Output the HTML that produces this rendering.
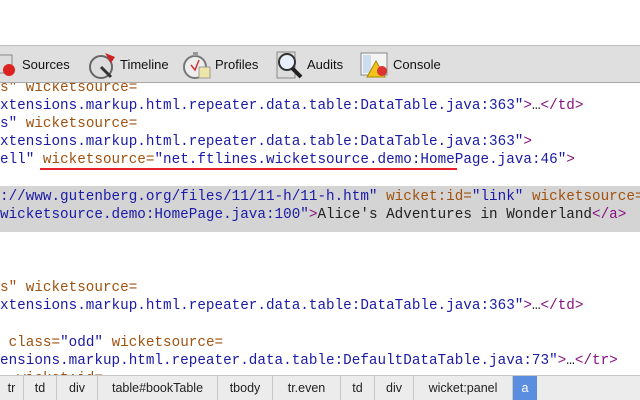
<!DOCTYPE html>
<html><head><meta charset="utf-8"><style>
*{margin:0;padding:0;box-sizing:border-box}
html,body{width:640px;height:400px;overflow:hidden}
body{background:#fff;position:relative;font-family:"Liberation Sans",Arial,sans-serif}
#tb{position:absolute;left:0;top:45px;width:640px;height:38px;background:#dfdfdf;border-top:1px solid #bdbdbd;border-bottom:1px solid #a8a8a8;z-index:4}
#tb .t{position:absolute;top:11px;font-size:13px;color:#111}
#tb svg{position:absolute}
#code{position:absolute;left:0;top:79px;width:640px;font-family:"Liberation Mono",monospace;font-size:14.3px;line-height:18px;color:#222}
.l{height:18px;white-space:pre;overflow:hidden}
.a{color:#a0520f}.v{color:#1a1aa6}.g{color:#881280}
#hl{position:absolute;left:0;top:186px;width:640px;height:46px;background:#d4d4d4}
#ul{position:absolute;left:40px;top:168px;width:417px;height:2px;background:#e8202a;z-index:2}
#bc{position:absolute;left:0;top:375px;width:640px;height:25px;background:#ececec;border-top:1px solid #c9c9c9;font-size:12.5px;color:#222;z-index:3}
#bc span{position:absolute;top:0;height:25px;line-height:24px;border-right:1px solid #c8c8c8;text-align:center}
</style></head><body>
<div id="tb">
<svg style="left:-6px;top:6px" width="26" height="26"><rect x="2" y="3" width="16" height="18" fill="#ddd" stroke="#888"/><circle cx="15" cy="18" r="6" fill="#d22"/></svg>
<span class="t" style="left:22px">Sources</span>
<svg style="left:87px;top:3px" width="32" height="32"><circle cx="14" cy="18" r="11" fill="#ddd" stroke="#666" stroke-width="2"/><path d="M18 4 L28 8 L24 14 Z" fill="#c22"/><line x1="14" y1="18" x2="24" y2="28" stroke="#333" stroke-width="3"/></svg>
<span class="t" style="left:120px">Timeline</span>
<svg style="left:182px;top:3px" width="30" height="32"><circle cx="13" cy="18" r="11" fill="#eee" stroke="#777" stroke-width="2"/><rect x="11" y="3" width="5" height="4" fill="#999"/><rect x="17" y="18" width="11" height="11" fill="#eee6a8" stroke="#999"/><path d="M9 16 L13 21 L17 11" stroke="#c33" fill="none" stroke-width="1.5"/></svg>
<span class="t" style="left:215px">Profiles</span>
<svg style="left:275px;top:3px" width="30" height="32"><rect x="2" y="3" width="18" height="26" fill="#ddd" stroke="#888"/><circle cx="12" cy="13" r="8" fill="#e8f0ff" stroke="#333" stroke-width="2"/><line x1="17" y1="19" x2="26" y2="28" stroke="#222" stroke-width="4"/></svg>
<span class="t" style="left:307px">Audits</span>
<svg style="left:360px;top:5px" width="30" height="28"><rect x="1" y="2" width="26" height="22" fill="#f4f4f4" stroke="#888"/><rect x="3" y="4" width="8" height="18" fill="#cde"/><path d="M16 10 L25 26 L7 26 Z" fill="#f2c31c" stroke="#a80"/><circle cx="22" cy="20" r="5" fill="#d33"/></svg>
<span class="t" style="left:393px">Console</span>
</div>
<div id="hl"></div>
<div id="ul"></div>
<div id="code"><div class="l"><span class="a">s" wicketsource=</span></div><div class="l"><span class="v">xtensions.markup.html.repeater.data.table:DataTable.java:363"</span><span class="g">&gt;</span>…<span class="g">&lt;/td&gt;</span></div><div class="l"><span class="v">s"</span> <span class="a">wicketsource=</span></div><div class="l"><span class="v">xtensions.markup.html.repeater.data.table:DataTable.java:363"</span><span class="g">&gt;</span></div><div class="l"><span class="v">ell"</span> <span class="a">wicketsource=</span><span class="v">"net.ftlines.wicketsource.demo:HomePage.java:46"</span><span class="g">&gt;</span></div><div class="l"> </div><div class="l" style="margin-top:1px"><span class="v">://www.gutenberg.org/files/11/11-h/11-h.htm"</span> <span class="a">wicket:id=</span><span class="v">"link"</span> <span class="a">wicketsource=</span></div><div class="l"><span class="v">wicketsource.demo:HomePage.java:100"</span><span class="g">&gt;</span>Alice's Adventures in Wonderland<span class="g">&lt;/a&gt;</span></div><div class="l"> </div><div class="l"> </div><div class="l"> </div><div class="l" style="margin-top:1px"><span class="a">s" wicketsource=</span></div><div class="l"><span class="v">xtensions.markup.html.repeater.data.table:DataTable.java:363"</span><span class="g">&gt;</span>…<span class="g">&lt;/td&gt;</span></div><div class="l"> </div><div class="l" style="margin-top:1px"> <span class="a">class=</span><span class="v">"odd"</span> <span class="a">wicketsource=</span></div><div class="l"><span class="v">ensions.markup.html.repeater.data.table:DefaultDataTable.java:73"</span><span class="g">&gt;</span>…<span class="g">&lt;/tr&gt;</span></div><div class="l"><span class="a">  wicket:id=</span></div></div>
<div id="bc">
<span style="left:0;width:24px">tr</span>
<span style="left:24px;width:33px">td</span>
<span style="left:57px;width:41px">div</span>
<span style="left:98px;width:120px">table#bookTable</span>
<span style="left:218px;width:55px">tbody</span>
<span style="left:273px;width:68px">tr.even</span>
<span style="left:341px;width:34px">td</span>
<span style="left:375px;width:39px">div</span>
<span style="left:414px;width:99px">wicket:panel</span>
<span style="left:513px;width:24px;background:#5b8ede;color:#fff;border-right:none">a</span>
</div>
</body></html>
